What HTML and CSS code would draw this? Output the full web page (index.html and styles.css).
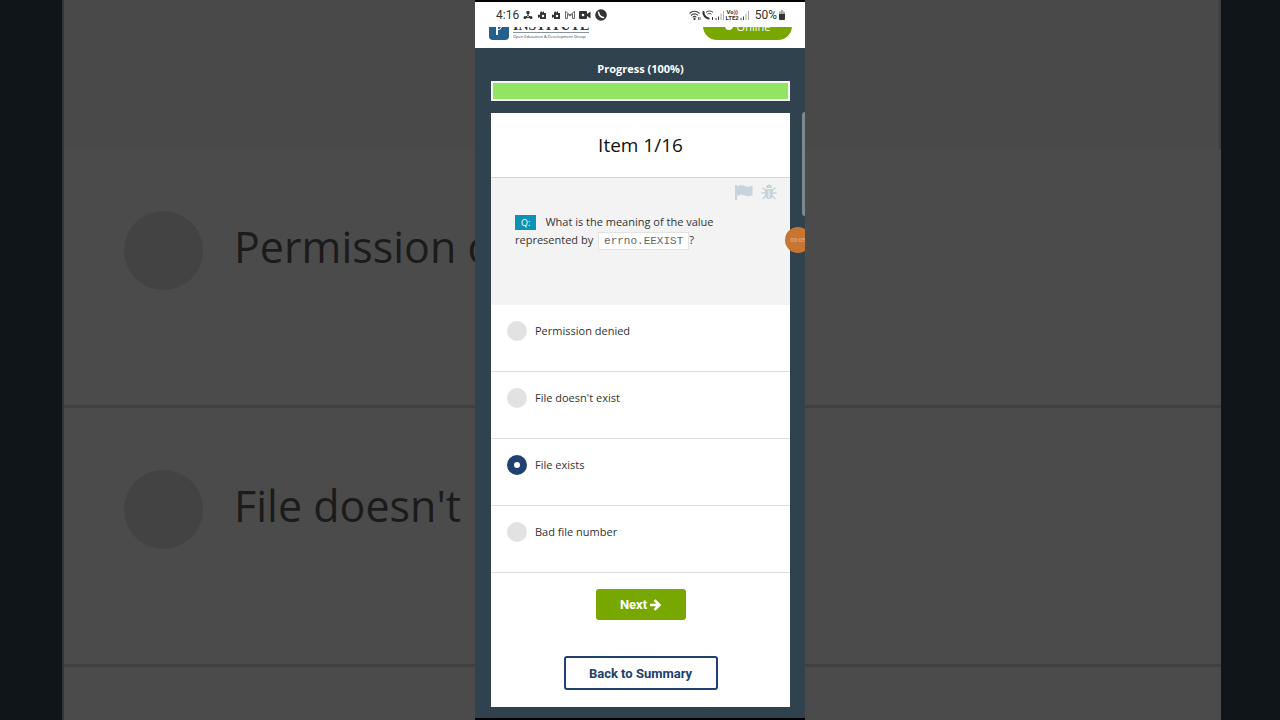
FILE: index.html
```html
<!DOCTYPE html>
<html lang="en">
<head>
    <meta charset="UTF-8">
    <meta name="viewport" content="width=device-width, initial-scale=1.0">
    <title>Item 1/16</title>
    <link rel="stylesheet" href="styles.css">
</head>
<body>
    <!-- enlarged, dimmed copy behind the phone -->
    <div class="backdrop" aria-hidden="true">
        <div class="backdrop-page">
            <div class="backdrop-question"></div>
            <div class="backdrop-row"><span class="backdrop-dot"></span><span>Permission d</span></div>
            <div class="backdrop-row"><span class="backdrop-dot"></span><span>File doesn't</span></div>
            <div class="backdrop-row"></div>
        </div>
    </div>

    <div class="phone">
        <div class="statusbar">
            <div class="status-left">
                <span class="clock">4:16</span>
                <svg width="10" height="10" viewBox="0 0 10 10" fill="#333"><circle cx="5" cy="2.500" r="1.700"/><circle cx="2" cy="7.500" r="1.500"/><circle cx="8" cy="7.500" r="1.500"/><path d="M5 3v2.500L2 7.500M5 5.500l3 2M2 7.500h6" fill="none" stroke="#333"/></svg>
                <svg width="10" height="10" viewBox="0 0 10 10" fill="#333"><path d="M3 3l1-2 1.500 1.500L7 1v2h2v6H3V7L1 8V4.500l2 .5z"/><circle cx="6" cy="6" r="1.200" fill="#fff"/></svg>
                <svg width="10" height="10" viewBox="0 0 10 10" fill="#333"><path d="M3 3l1-2 1.500 1.500L7 1v2h2v6H3V7L1 8V4.500l2 .5z"/><circle cx="6" cy="6" r="1.200" fill="#fff"/></svg>
                <svg width="10" height="10" viewBox="0 0 10 10" fill="none" stroke="#444"><path d="M.5 8.500v-7L5 5l4.500-3.500v7h-2V4L5 6 2.500 4v4.500z" stroke-width=".8"/></svg>
                <svg width="12" height="10" viewBox="0 0 12 10" fill="#333"><rect y="1" width="8" height="8" rx="1"/><path d="M8 4l3.500-2.500v7L8 6z"/><circle cx="4" cy="5" r="1.300" fill="#fff"/></svg>
                <svg width="12" height="12" viewBox="0 0 12 12"><circle cx="6" cy="6" r="5.800" fill="#333"/><path d="M3.500 3.200c.4 2.800 2.300 5 5 5.400" fill="none" stroke="#fff" stroke-width="1.500" stroke-linecap="round"/></svg>
            </div>
            <div class="status-right">
                <svg width="12" height="12" viewBox="0 0 12 12" fill="none" stroke="#444" stroke-width="1.100"><path d="M.5 4.500c3-3 7-3 10 0M2 6.500c2.200-2.200 5-2.200 7 0M3.700 8.300c1.300-1.200 2.400-1.200 3.600 0"/><circle cx="5.500" cy="10" r=".6"/><path d="M9.500 8v3M11 8v3" stroke-width=".8"/></svg>
                <svg width="12" height="12" viewBox="0 0 12 12" fill="none" stroke="#333"><path d="M1.500 3c-.4 3 2 6 5 6.500" stroke-width="2.200" stroke-linecap="round"/><path d="M4 3.500c2-2 5-2 7 0M5.500 5.200c1.200-1 2.700-1 4 0M10.500 8v3"/></svg>
                <svg width="10" height="10" viewBox="0 0 10 10"><path d="M1 8v2M3.500 6.500V10" stroke="#444"/><path d="M6 3.500V10M8.500 1v9" stroke="#aaa"/></svg>
                <span class="volte">Vo))<br>LTE2</span>
                <svg width="10" height="10" viewBox="0 0 10 10"><path d="M1 8v2M3.500 6.500V10" stroke="#444"/><path d="M6 3.500V10M8.500 1v9" stroke="#aaa"/></svg>
                <span class="battery-text">50%</span>
                <svg width="8" height="10" viewBox="0 0 8 10"><path d="M2 1.500h1V0h2v1.500h1q1 0 1 1V5H1V2.500q0-1 1-1z" fill="#aaa"/><path d="M1 4h6v5q0 1-1 1H2q-1 0-1-1z" fill="#333"/></svg>
            </div>
        </div>

        <header class="site-header">
            <div class="logo">
                <svg width="20" height="26" viewBox="0 0 20 26"><path d="M0 0h20v22q0 4-4 4H4q-4 0-4-4z" fill="#255f8c"/><path d="M8 21v-7q0-3 3-3" fill="none" stroke="#fff" stroke-width="2"/><path d="M8 16q4 0 5-4" fill="none" stroke="#fff"/></svg>
                <div class="logo-text">
                    <span class="logo-name">INSTITUTE</span>
                    <span class="logo-sub">Open Education &amp; Development Group</span>
                </div>
            </div>
            <div class="online"><span class="online-dot"></span>Online</div>
        </header>

        <main class="content">
            <label class="progress-label" for="progress">Progress (100%)</label>
            <progress class="progress" id="progress" value="100" max="100"></progress>

            <section class="card">
                <h1 class="card-title">Item 1/16</h1>
                <div class="question">
                    <div class="tools">
                        <button type="button" aria-label="Flag item">
                            <svg width="18" height="16" viewBox="0 0 18 16" fill="#c9d3da"><path d="M0 1h2v15H0z"/><path d="M2 2.500C5 .5 8 1 10.500 2.200 13 3.400 15 2.500 17.500 1.500v9.500c-2.500 1.500-5 1.500-7.500.5-2.500-1.200-5-1-8 .5z"/></svg>
                        </button>
                        <button type="button" aria-label="Report a bug">
                            <svg width="16" height="16" viewBox="0 0 16 16"><path d="M5 4a3 3.500 0 0 1 6 0z" fill="#c9d3da"/><path d="M4 5h8v6q0 4-4 4t-4-4z" fill="#c9d3da"/><path d="M4 6L1.500 3.500M12 6l2.500-2.500M4 9H.5M12 9h3.500M4.500 12l-3 3M11.500 12l3 3" stroke="#c9d3da" stroke-width="1.500"/><path d="M8 6.500V14" stroke="#f3f3f3"/></svg>
                        </button>
                    </div>
                    <p class="question-text"><span class="q-badge">Q:</span>What is the meaning of the value represented by <code>errno.EEXIST</code>?</p>
                </div>

                <form class="answers">
                    <label class="answer"><input type="radio" name="answer"><span>Permission denied</span></label>
                    <label class="answer"><input type="radio" name="answer"><span>File doesn't exist</span></label>
                    <label class="answer"><input type="radio" name="answer" checked><span>File exists</span></label>
                    <label class="answer"><input type="radio" name="answer"><span>Bad file number</span></label>
                </form>

                <div class="actions">
                    <button type="button" class="btn btn-next">Next
                        <svg width="11" height="12" viewBox="0 0 11 12" fill="none" stroke="#fff" stroke-width="2.600"><path d="M0 6h9M4.500 1.200L9.300 6l-4.800 4.800"/></svg>
                    </button>
                    <button type="button" class="btn btn-back">Back to Summary</button>
                </div>
            </section>
        </main>

        <div class="edge-handle"></div>
        <div class="recorder">00:05</div>
    </div>
</body>
</html>
```
FILE: styles.css
```css
* {
    box-sizing: border-box;
}

body {
    margin: 0;
    background: #0f1519;
    font-family: "Open Sans", sans-serif;
    font-size: 11px;
    color: #333;
}

/* Backdrop */
.backdrop {
    position: fixed;
    inset: 0;
    padding: 0 59px 0 62px;
    overflow: hidden;
    z-index: -1;
}

.backdrop-page {
    height: 100%;
    background: #4b4b4b;
    border-left: 2px solid #30373b;
    overflow: hidden;
}

.backdrop-question {
    height: 149px;
    background: #494949;
    border-right: 2px solid #3e3e3e;
}

.backdrop-row {
    display: flex;
    gap: 31px;
    height: 259px;
    padding: 62px 60px;
    border-bottom: 3px solid #404040;
    font-size: 43px;
    line-height: 72px;
    color: #1b1b1b;
}

.backdrop-dot {
    width: 79px;
    height: 79px;
    border-radius: 50%;
    background: #434343;
}

/* Phone */
.phone {
    position: relative;
    display: flex;
    flex-direction: column;
    width: 330px;
    min-height: 100vh;
    margin: 0 auto;
    background: #30424d;
    border-top: 2px solid #000;
    border-bottom: 2px solid #000;
    overflow: hidden;
}

.statusbar {
    display: flex;
    justify-content: space-between;
    align-items: center;
    height: 25px;
    padding: 0 19px 0 21px;
    background: #fff;
    font-family: Roboto, sans-serif;
    font-size: 12px;
}

.status-left,
.status-right {
    display: flex;
    align-items: center;
}

.status-left {
    gap: 4px;
}

.status-right {
    gap: 1px;
}

.volte {
    font-size: 6px;
    font-weight: bold;
    line-height: 6px;
    text-align: center;
}

.battery-text {
    margin-left: 4px;
}

.site-header {
    display: flex;
    justify-content: space-between;
    align-items: flex-end;
    height: 21px;
    padding: 0 13px 8px 14px;
    background: #fff;
    overflow: hidden;
}

.logo {
    display: flex;
    align-items: flex-end;
    gap: 4px;
}

.logo-text {
    display: flex;
    flex-direction: column;
}

.logo-name {
    border-bottom: 1px solid #8a9399;
    font-family: "Liberation Serif", serif;
    font-size: 14px;
    font-weight: bold;
    line-height: 12px;
}

.logo-sub {
    font-size: 4px;
    line-height: 7px;
    color: #30424d;
    white-space: nowrap;
}

.online {
    display: flex;
    justify-content: center;
    align-items: center;
    gap: 4px;
    width: 89px;
    height: 28px;
    border-radius: 14px;
    background: #78a800;
    color: #fff;
}

.online-dot {
    width: 8px;
    height: 8px;
    border-radius: 50%;
    background: #fff;
}

.content {
    display: flex;
    flex-direction: column;
    flex: 1;
    padding: 12px 15px 11px 16px;
}

.progress-label {
    font-weight: bold;
    line-height: 18px;
    text-align: center;
    color: #fff;
}

.progress {
    display: block;
    width: 100%;
    height: 20px;
    margin: 3px 0 12px;
    border: 2px solid #f3f6f3;
    background: #fff;
    appearance: none;
}

.progress::-webkit-progress-bar {
    background: #fff;
}

.progress::-webkit-progress-value {
    background: #92e463;
}

.progress::-moz-progress-bar {
    background: #92e463;
}

.card {
    flex: 1;
    background: #fff;
}

.card-title {
    margin: 0;
    border-bottom: 1px solid #d6d6d6;
    font-size: 19px;
    font-weight: normal;
    line-height: 64px;
    text-align: center;
    color: #111;
}

.question {
    height: 127px;
    padding: 6px 13px 0 24px;
    background: #f3f3f3;
}

.tools {
    display: flex;
    justify-content: flex-end;
    gap: 8px;
    height: 18px;
}

.tools button {
    padding: 0;
    border: 0;
    background: none;
}

.question-text {
    margin: 11px 24px 0 0;
    line-height: 18px;
}

.q-badge {
    display: inline-block;
    margin-right: 9px;
    padding: 0 6px;
    background: #0c93b3;
    font-size: 9px;
    line-height: 15px;
    color: #fff;
}

.question-text code {
    margin-left: 2px;
    padding: 2px 5px;
    border: 1px solid #e3e3e3;
    background: #fff;
    font-family: "Liberation Mono", monospace;
    font-size: 11px;
    color: #666;
}

.answer {
    display: flex;
    gap: 8px;
    height: 67px;
    padding: 16px;
    border-bottom: 1px solid #dcdcdc;
    line-height: 20px;
}

.answer input {
    width: 20px;
    height: 20px;
    margin: 0;
    border-radius: 50%;
    background: #e2e2e2;
    appearance: none;
}

.answer input:checked {
    border: 7px solid #20406f;
    background: #fff;
}

.actions {
    display: flex;
    flex-direction: column;
    align-items: center;
    gap: 36px;
    padding: 16px;
}

.btn {
    display: flex;
    justify-content: center;
    align-items: center;
    gap: 3px;
    border-radius: 3px;
    font-family: Roboto, sans-serif;
    font-size: 13px;
    font-weight: bold;
}

.btn-next {
    width: 90px;
    height: 31px;
    border: 0;
    background: #78a800;
    color: #fff;
}

.btn-back {
    width: 154px;
    height: 34px;
    border: 2px solid #20406f;
    background: #fff;
    color: #20406f;
}

/* Overlays of the phone system */
.edge-handle {
    position: absolute;
    top: 110px;
    right: 0;
    width: 3px;
    height: 104px;
    border-radius: 3px 0 0 3px;
    background: #7b8991;
}

.recorder {
    position: absolute;
    top: 225px;
    right: -6px;
    width: 26px;
    height: 26px;
    border-radius: 50%;
    background: #c8752f;
    font-size: 6px;
    line-height: 26px;
    text-align: center;
    color: #e5c3a3;
}
```
